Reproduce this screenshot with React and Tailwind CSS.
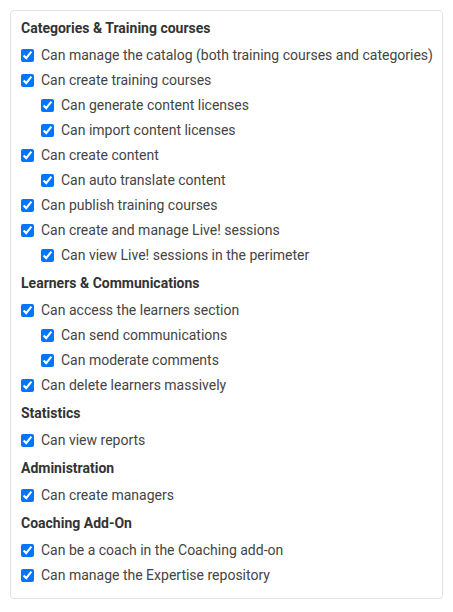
import React from "react";

const sections = [
  {
    title: "Categories & Training courses",
    items: [
      ["Can manage the catalog (both training courses and categories)", 0],
      ["Can create training courses", 0],
      ["Can generate content licenses", 1],
      ["Can import content licenses", 1],
      ["Can create content", 0],
      ["Can auto translate content", 1],
      ["Can publish training courses", 0],
      ["Can create and manage Live! sessions", 0],
      ["Can view Live! sessions in the perimeter", 1],
    ],
  },
  {
    title: "Learners & Communications",
    items: [
      ["Can access the learners section", 0],
      ["Can send communications", 1],
      ["Can moderate comments", 1],
      ["Can delete learners massively", 0],
    ],
  },
  { title: "Statistics", items: [["Can view reports", 0]] },
  { title: "Administration", items: [["Can create managers", 0]] },
  {
    title: "Coaching Add-On",
    items: [
      ["Can be a coach in the Coaching add-on", 0],
      ["Can manage the Expertise repository", 0],
    ],
  },
];

export default function App() {
  return (
    <div className="w-[453px] h-[612px] bg-white p-[10px] font-['Roboto',sans-serif]">
      <div className="w-[433px] h-[589px] border border-[#e2e2e2] rounded-[4px] pl-[10px] pt-[7px]">
        {sections.map((s, i) => (
          <div key={i} className={i > 0 ? "mt-[5px]" : ""}>
            <div className="h-[20px] leading-[20px] text-[14px] font-bold text-[#333] mb-[5px]">
              {s.title}
            </div>
            {s.items.map(([label, lvl], j) => (
              <label
                key={j}
                className={
                  "flex items-center h-[25px] text-[14px] text-[#444] " +
                  (lvl ? "pl-[20px]" : "")
                }
              >
                <input
                  type="checkbox"
                  checked
                  readOnly
                  className="m-0 w-[13px] h-[13px] mr-[7px] accent-[#0075ff]"
                />
                <span>{label}</span>
              </label>
            ))}
          </div>
        ))}
      </div>
    </div>
  );
}
